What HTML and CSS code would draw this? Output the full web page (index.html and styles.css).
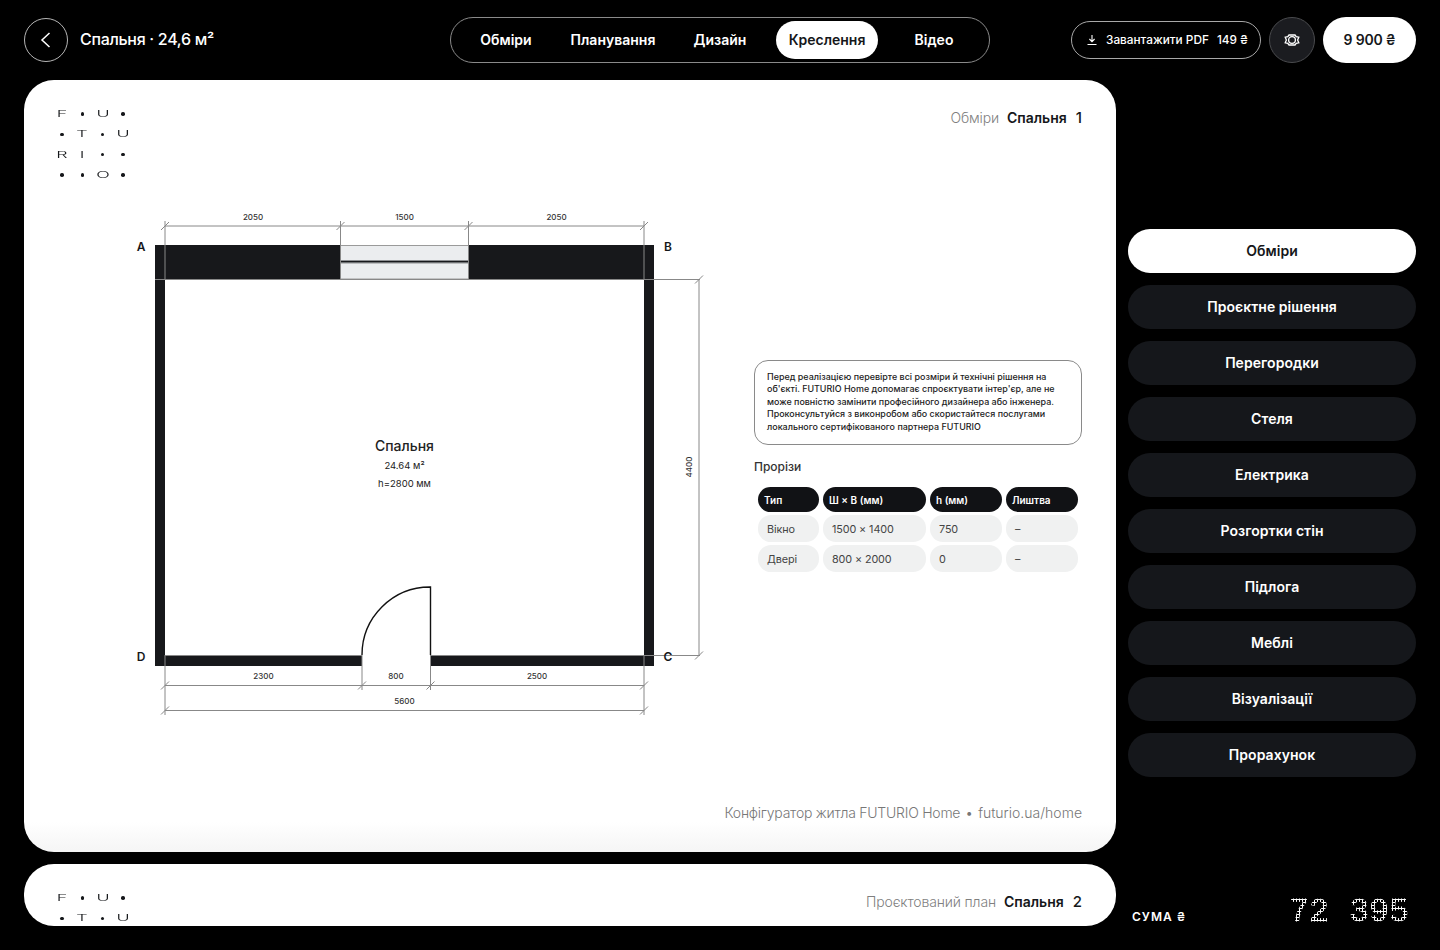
FILE: index.html
```html
<!DOCTYPE html>
<html lang="uk">
<head>
    <meta charset="UTF-8">
    <meta name="viewport" content="width=device-width, initial-scale=1.0">
    <title>Спальня · Креслення</title>
    <link rel="stylesheet" href="styles.css">
</head>
<body>
    <header class="topbar">
        <div class="topbar-left">
            <button class="back-btn" aria-label="Назад">
                <svg width="16" height="16" viewBox="0 0 16 16"><polyline points="11.5,1 4,8 11.5,15" fill="none" stroke="#fff" stroke-width="1.5"/></svg>
            </button>
            <div class="room-title">Спальня · 24,6 м²</div>
        </div>
        <nav class="tabs">
            <a class="tab">Обміри</a>
            <a class="tab">Планування</a>
            <a class="tab">Дизайн</a>
            <a class="tab active">Креслення</a>
            <a class="tab">Відео</a>
        </nav>
        <div class="topbar-right">
            <button class="pdf-btn">
                <svg width="12" height="12" viewBox="0 0 12 12"><path d="M6 1V7.5M3.4 5L6 7.6L8.6 5M1.5 10.5H10.5" fill="none" stroke="#fff" stroke-width="1.1"/></svg>
                <span>Завантажити PDF</span>
                <span>149 ₴</span>
            </button>
            <button class="icon-btn" aria-label="Перегляд">
                <svg width="16" height="12" viewBox="0 0 16 12"><path d="M5 1H11L12.2 2.6L14.8 3.2L13.6 6L14.8 8.8L12.2 9.4L11 11H5L3.8 9.4L1.2 8.8L2.4 6L1.2 3.2L3.8 2.6Z" fill="none" stroke="#fff" stroke-width="1.3"/><circle cx="8" cy="6" r="3.4" fill="none" stroke="#fff" stroke-width="1.3"/></svg>
            </button>
            <button class="price-btn">9 900 ₴</button>
        </div>
    </header>

    <div class="layout">
        <main class="sheets">
            <section class="sheet">
                <div class="sheet-head">
                    <div class="logo">
                        <span>F</span><i></i><span>U</span><i></i>
                        <i></i><span>T</span><i></i><span>U</span>
                        <span>R</span><span>I</span><i></i><i></i>
                        <i></i><i></i><span>O</span><i></i>
                    </div>
                    <div class="sheet-meta">
                        <span class="meta-name">Обміри</span>
                        <span class="meta-room">Спальня</span>
                        <span class="meta-num">1</span>
                    </div>
                </div>

                <div class="sheet-body">
                    <svg class="plan" width="590" height="520" viewBox="130 205 590 520">
                        <!-- walls -->
                        <rect class="wall" x="155" y="245" width="186" height="34"/>
                        <rect class="wall" x="469" y="245" width="185" height="34"/>
                        <rect class="wall" x="155" y="279" width="10" height="387"/>
                        <rect class="wall" x="644" y="279" width="10" height="387"/>
                        <rect class="wall" x="155" y="655" width="207" height="11"/>
                        <rect class="wall" x="430" y="655" width="224" height="11"/>

                        <!-- window -->
                        <rect class="glass" x="340.5" y="245.5" width="128" height="33.5"/>
                        <rect class="glass-bar" x="341" y="260" width="127" height="3.5"/>
                        <line class="glass-line" x1="341" y1="261.7" x2="468" y2="261.7"/>

                        <!-- door -->
                        <path class="door" d="M362 655A68 68 0 0 1 430.5 587V655"/>

                        <!-- dimension lines -->
                        <g class="dim">
                            <path d="M165 221V280M340.5 221V279M468.5 221V279M644 221V280"/>
                            <path d="M165 226H644"/>
                            <path d="M155 279.5H700M165 655.5H362M430.5 655.5H700"/>
                            <path d="M699 279V655"/>
                            <path d="M165 655V715M362 655V690M430.5 655V690M644 655V715"/>
                            <path d="M165 685.5H644M165 710.5H644"/>
                            <path d="M161 230L169 222M336.5 230L344.5 222M464.5 230L472.5 222M640 230L648 222"/>
                            <path d="M695 283.500L703 275.500M695 659.500L703 651.500"/>
                            <path d="M161 689.500L169 681.500M358 689.500L366 681.500M426.500 689.500L434.500 681.500M640 689.500L648 681.500"/>
                            <path d="M161 714.500L169 706.500M640 714.500L648 706.500"/>
                        </g>

                        <text class="dim-text" x="253" y="220">2050</text>
                        <text class="dim-text" x="404.500" y="220">1500</text>
                        <text class="dim-text" x="556.500" y="220">2050</text>
                        <text class="dim-text" x="263.500" y="679">2300</text>
                        <text class="dim-text" x="396" y="679">800</text>
                        <text class="dim-text" x="537" y="679">2500</text>
                        <text class="dim-text" x="404.500" y="704">5600</text>
                        <text class="dim-text" transform="translate(691.500 467) rotate(-90)">4400</text>

                        <text class="corner" x="141" y="251">A</text>
                        <text class="corner" x="668" y="251">B</text>
                        <text class="corner" x="668" y="661">C</text>
                        <text class="corner" x="141" y="661">D</text>

                        <text class="room-name" x="404.500" y="451">Спальня</text>
                        <text class="room-info" x="404.500" y="469">24.64 м²</text>
                        <text class="room-info" x="404.500" y="487">h=2800 мм</text>
                    </svg>

                    <aside class="notes">
                        <p class="notice">Перед реалізацією перевірте всі розміри й технічні рішення на об'єкті. FUTURIO Home допомагає спроєктувати інтер'єр, але не може повністю замінити професійного дизайнера або інженера. Проконсультуйся з виконробом або скористайтеся послугами локального сертифікованого партнера FUTURIO</p>
                        <h3 class="notes-title">Прорізи</h3>
                        <table class="openings">
                            <thead>
                                <tr><th class="col-type">Тип</th><th class="col-size">Ш × В (мм)</th><th class="col-h">h (мм)</th><th class="col-h">Лиштва</th></tr>
                            </thead>
                            <tbody>
                                <tr><td>Вікно</td><td>1500 × 1400</td><td>750</td><td>–</td></tr>
                                <tr><td>Двері</td><td>800 × 2000</td><td>0</td><td>–</td></tr>
                            </tbody>
                        </table>
                    </aside>
                </div>

                <footer class="sheet-foot"><span class="foot-name">Конфігуратор житла FUTURIO Home</span><span class="foot-sep">•</span><span>futurio.ua/home</span></footer>
            </section>

            <section class="sheet sheet-next">
                <div class="sheet-head">
                    <div class="logo">
                        <span>F</span><i></i><span>U</span><i></i>
                        <i></i><span>T</span><i></i><span>U</span>
                    </div>
                    <div class="sheet-meta">
                        <span class="meta-name">Проєктований план</span>
                        <span class="meta-room">Спальня</span>
                        <span class="meta-num">2</span>
                    </div>
                </div>
            </section>
        </main>

        <aside class="sidebar">
            <ul class="steps">
                <li class="step active">Обміри</li>
                <li class="step">Проєктне рішення</li>
                <li class="step">Перегородки</li>
                <li class="step">Стеля</li>
                <li class="step">Електрика</li>
                <li class="step">Розгортки стін</li>
                <li class="step">Підлога</li>
                <li class="step">Меблі</li>
                <li class="step">Візуалізації</li>
                <li class="step">Прорахунок</li>
            </ul>
            <div class="total">
                <span class="total-label">СУМА ₴</span>
                <span class="total-value">72 395</span>
            </div>
        </aside>
    </div>
</body>
</html>
```

FILE: styles.css
```css
* {
    box-sizing: border-box;
}

html, body {
    height: 950px;
    overflow: hidden;
}

body {
    margin: 0;
    background: #000;
    color: #fff;
    font-family: 'Inter', 'Roboto', sans-serif;
}

button {
    font-family: inherit;
    cursor: pointer;
}

/* Top bar */
.topbar {
    height: 80px;
    padding: 0 24px;
    display: grid;
    grid-template-columns: 1fr 540px 1fr;
    align-items: center;
}

.topbar-left {
    display: flex;
    align-items: center;
    gap: 12px;
}

.back-btn {
    width: 44px;
    height: 44px;
    padding: 0;
    border-radius: 50%;
    border: 1px solid #b5b5b5;
    background: none;
    display: flex;
    align-items: center;
    justify-content: center;
}

.room-title {
    font-size: 16px;
    font-weight: 500;
    letter-spacing: -0.3px;
    margin-top: -2px;
}

.tabs {
    height: 46px;
    padding: 0 1.5px;
    border: 1px solid #8a8a8a;
    border-radius: 23px;
    display: grid;
    grid-template-columns: repeat(5, minmax(0, 1fr));
    align-items: center;
    justify-items: center;
}

.tab {
    height: 38px;
    padding: 0 13px;
    border-radius: 19px;
    font-size: 14px;
    font-weight: 600;
    line-height: 38px;
    white-space: nowrap;
}

.tab.active {
    background: #fff;
    color: #15171a;
}

.topbar-right {
    display: flex;
    justify-content: flex-end;
    align-items: center;
    gap: 8px;
}

.pdf-btn {
    width: 190px;
    height: 38px;
    padding: 0 0 0 14px;
    border: 1px solid #a8a8a8;
    border-radius: 19px;
    background: none;
    color: #fff;
    font-size: 11.8px;
    font-weight: 500;
    display: flex;
    align-items: center;
    gap: 8px;
    white-space: nowrap;
}

.icon-btn {
    width: 46px;
    height: 46px;
    padding: 0;
    border-radius: 50%;
    border: 1px solid #4a4b4e;
    background: #1b1c20;
    display: flex;
    align-items: center;
    justify-content: center;
}

.price-btn {
    width: 93px;
    height: 46px;
    padding: 0 0 1px;
    border: none;
    border-radius: 23px;
    background: #fff;
    color: #15171a;
    font-size: 14px;
    font-weight: 600;
    letter-spacing: -0.2px;
}

/* Main area */
.layout {
    padding: 0 24px;
    display: grid;
    grid-template-columns: 1092px 288px;
    gap: 12px;
}

.sheets {
    display: flex;
    flex-direction: column;
    gap: 12px;
}

.sheet {
    height: 772px;
    padding: 29px 34px 29px;
    border-radius: 30px;
    color: #15171a;
    background: linear-gradient(to bottom, #fff calc(100% - 30px), #f5f5f5 100%);
    display: flex;
    flex-direction: column;
}

.sheet-next {
    height: 62px;
    background: #fff;
    overflow: hidden;
}

.sheet-head {
    display: flex;
    justify-content: space-between;
    align-items: flex-start;
}

.logo {
    margin-top: 1px;
    display: grid;
    grid-template-columns: repeat(4, 8px);
    grid-auto-rows: 8px;
    gap: 12.35px;
    flex: none;
}

.logo span {
    display: flex;
    align-items: center;
    justify-content: center;
    font-size: 8.5px;
    font-weight: 300;
    line-height: 8px;
    transform: scaleX(2.1);
}

.logo i {
    width: 3.5px;
    height: 3.5px;
    margin: auto;
    border-radius: 50%;
    background: #15171a;
}

.sheet-meta {
    display: flex;
    align-items: center;
    line-height: 18px;
    font-size: 14px;
}

.meta-name {
    font-weight: 300;
    letter-spacing: -0.15px;
    color: #7f7f7f;
    margin-right: 8px;
}

.meta-room {
    font-weight: 600;
    margin-right: 9px;
}

.meta-num {
    font-size: 15px;
    font-weight: 500;
}

.sheet-body {
    margin-top: 26px;
    padding-left: 72px;
    display: flex;
    justify-content: space-between;
    align-items: center;
}

.plan {
    display: block;
    flex: none;
}

.wall {
    fill: #17181b;
}

.glass {
    fill: #ebedef;
    stroke: #9a9a9a;
    stroke-width: 1;
}

.glass-bar {
    fill: #8d8f92;
}

.glass-line {
    stroke: #17181b;
    stroke-width: 1.3;
}

.door {
    fill: #fff;
    stroke: #111;
    stroke-width: 1.4;
}

.dim {
    fill: none;
    stroke: #888;
    stroke-width: 1;
}

.dim-text {
    font-size: 8px;
    font-weight: 500;
    fill: #333;
    text-anchor: middle;
}

.corner {
    font-size: 12px;
    font-weight: 600;
    fill: #15171a;
    text-anchor: middle;
}

.room-name {
    font-size: 14px;
    font-weight: 500;
    fill: #222;
    text-anchor: middle;
}

.room-info {
    font-size: 9.500px;
    font-weight: 400;
    fill: #222;
    text-anchor: middle;
}

/* Notes and openings table */
.notes {
    width: 328px;
    margin-top: 5px;
    flex: none;
}

.notice {
    margin: 0;
    height: 85px;
    padding: 10px 12px 0;
    border: 1px solid #8a8a8a;
    border-radius: 14px;
    font-size: 8.950px;
    font-weight: 500;
    line-height: 12.400px;
    color: #222;
}

.notes-title {
    margin: 14px 0 9px;
    font-size: 12px;
    line-height: 16px;
    font-weight: 500;
    color: #333;
}

.openings {
    width: 328px;
    table-layout: fixed;
    border-collapse: separate;
    border-spacing: 4px 3px;
}

.col-type { width: 61px; }
.col-size { width: 103px; }
.col-h { width: 72px; }

.openings th,
.openings td {
    padding: 0;
    text-align: left;
    border-radius: 13px;
}

.openings th {
    height: 25px;
    padding-left: 6px;
    background: #111215;
    color: #fff;
    font-size: 10px;
    font-weight: 600;
}

.openings td {
    height: 27px;
    padding: 1px 0 0 9px;
    background: #f0f1f1;
    color: #444;
    font-size: 10.800px;
    letter-spacing: -0.1px;
    font-weight: 400;
}

.sheet-foot {
    margin-top: auto;
    text-align: right;
    font-size: 14px;
    font-weight: 300;
    line-height: 20px;
    color: #777;
}

.foot-name {
    letter-spacing: -0.24px;
}

.foot-sep {
    margin: 0 5px;
}

/* Sidebar */
.sidebar {
    height: 846px;
    padding-top: 149px;
    display: flex;
    flex-direction: column;
}

.steps {
    list-style-type: none;
    margin: 0;
    padding: 0;
    display: flex;
    flex-direction: column;
    gap: 12px;
}

.step {
    height: 44px;
    border-radius: 22px;
    background: #15171b;
    font-size: 14px;
    font-weight: 600;
    letter-spacing: 0.05px;
    line-height: 44px;
    text-align: center;
}

.step.active {
    background: #fff;
    color: #15171a;
}

.total {
    margin-top: auto;
    padding: 0 7px 0 4px;
    display: flex;
    justify-content: space-between;
    align-items: flex-end;
}

.total-label {
    font-size: 12px;
    font-weight: 600;
    letter-spacing: 1px;
    line-height: 20px;
    margin-bottom: -1px;
}

/* dot-matrix look: real text cut through a grid of dots */
.total-value {
    font-family: 'Liberation Mono', monospace;
    font-size: 33.300px;
    line-height: 34px;
    margin-bottom: -3px;
    white-space: pre;
    color: transparent;
    -webkit-text-stroke: 0.8px transparent;
    background-image: radial-gradient(circle at center, #fff 1px, rgba(255, 255, 255, 0) 1.4px);
    background-size: 3px 3px;
    -webkit-background-clip: text;
    background-clip: text;
}
```
